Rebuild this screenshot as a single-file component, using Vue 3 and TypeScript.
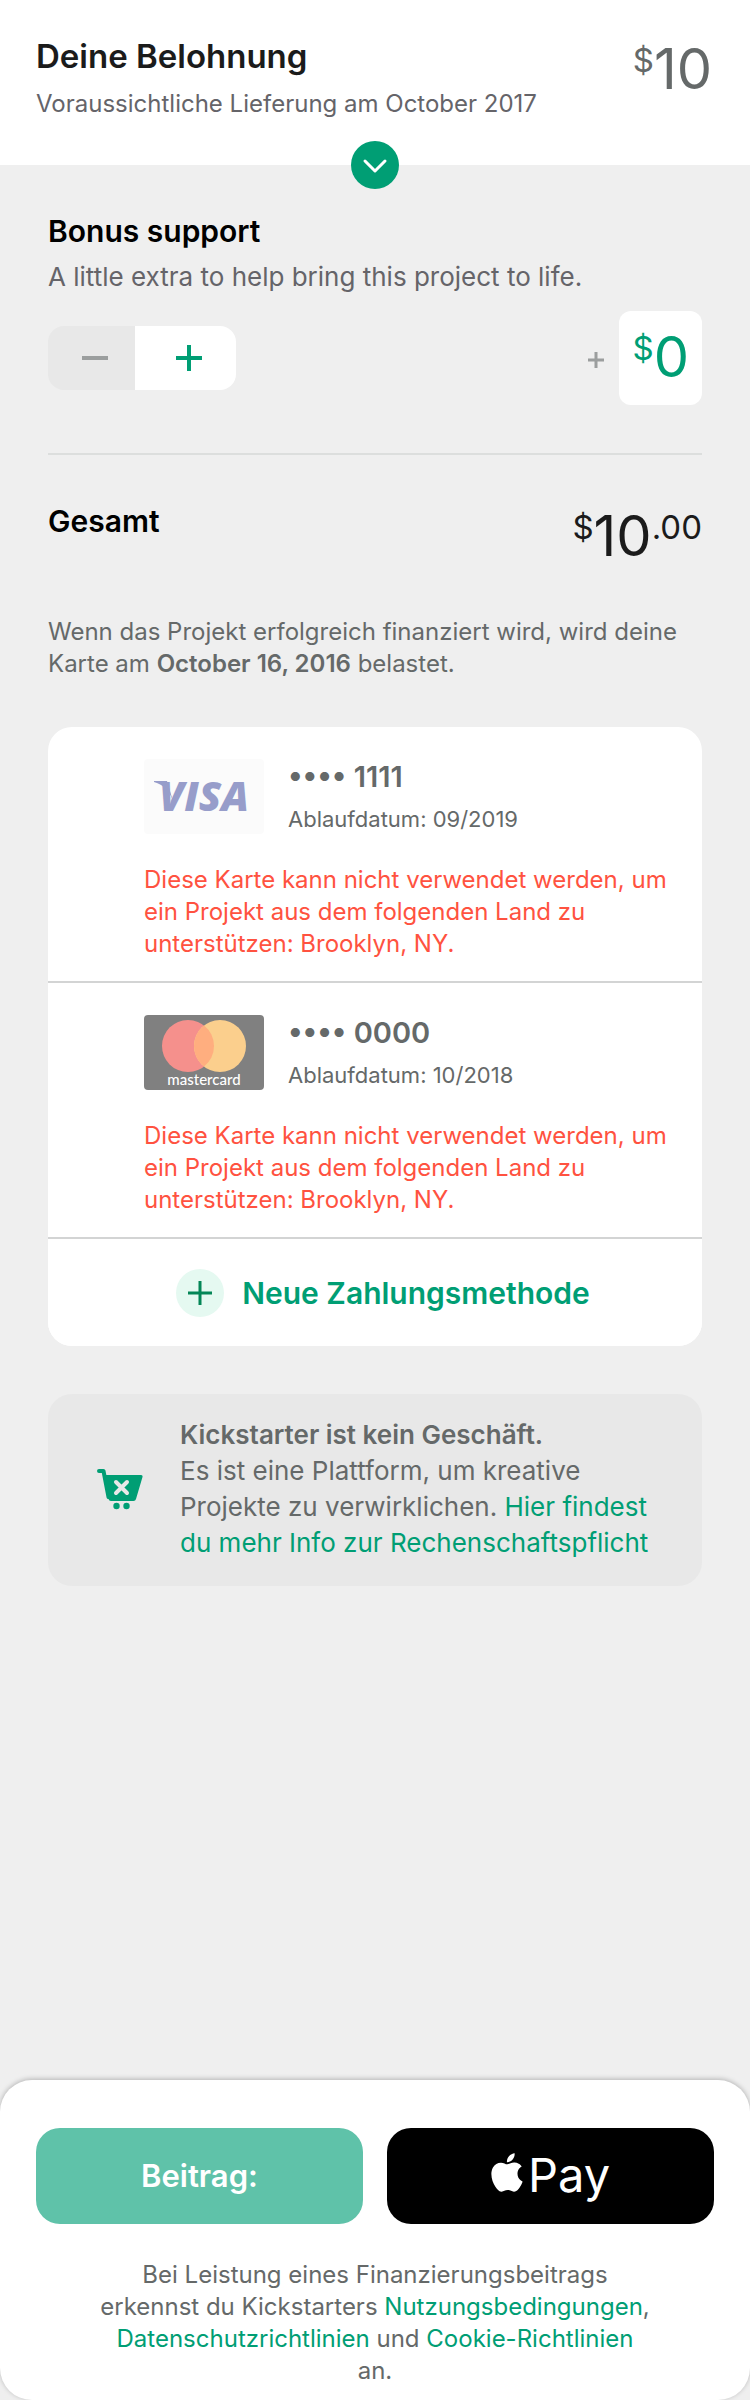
<script setup lang="ts">
import { computed, ref } from 'vue'

interface StoredCard {
  id: string
  brand: 'visa' | 'mastercard'
  lastFour: string
  expires: string
}

const pledge = 10
const bonus = ref('0')
const bonusValue = computed(() => Number(bonus.value) || 0)
const total = computed(() => {
  const [whole, cents] = (pledge + bonusValue.value).toFixed(2).split('.')
  return { whole, cents }
})

const cards: StoredCard[] = [
  { id: 'a', brand: 'visa', lastFour: '1111', expires: '09/2019' },
  { id: 'b', brand: 'mastercard', lastFour: '0000', expires: '10/2018' },
]

function step(delta: number) {
  bonus.value = String(Math.max(0, bonusValue.value + delta))
}
</script>

<template>
  <div class="page">
    <header class="header">
      <div>
        <h1 class="title">Deine Belohnung</h1>
        <p class="delivery">Voraussichtliche Lieferung am October 2017</p>
      </div>
      <p class="amount muted"><span class="small">$</span><span>{{ pledge }}</span></p>
      <button class="expand" type="button" aria-label="Details">
        <svg viewBox="0 0 48 48" width="48" height="48" aria-hidden="true">
          <path d="M14 20l10 10 10-10" fill="none" stroke="#fff" stroke-width="3" stroke-linecap="round" stroke-linejoin="round" />
        </svg>
      </button>
    </header>

    <main class="main">
      <section class="bonus">
        <h2 class="heading">Bonus support</h2>
        <p class="hint">A little extra to help bring this project to life.</p>
        <div class="bonus-row">
          <div class="stepper">
            <button class="minus" type="button" aria-label="Weniger" :disabled="bonusValue === 0" @click="step(-1)">
              <svg viewBox="0 0 28 28" width="28" height="28" aria-hidden="true">
                <path d="M1 14h26" stroke="#9b9e9e" stroke-width="4" />
              </svg>
            </button>
            <button class="plus" type="button" aria-label="Mehr" @click="step(1)">
              <svg viewBox="0 0 28 28" width="28" height="28" aria-hidden="true">
                <path d="M1 14h26M14 1v26" stroke="#009e74" stroke-width="4" />
              </svg>
            </button>
          </div>
          <div class="bonus-amount">
            <svg viewBox="0 0 18 22" width="18" height="22" aria-hidden="true">
              <path d="M1 13h16M9 5v16" stroke="#9b9e9e" stroke-width="3" />
            </svg>
            <label class="amount field">
              <span class="small">$</span>
              <input v-model="bonus" inputmode="numeric" aria-label="Bonus support" :style="{ width: bonus.length + 'ch' }" />
            </label>
          </div>
        </div>
      </section>

      <section class="total">
        <h2 class="heading">Gesamt</h2>
        <p class="amount">
          <span class="small">$</span><span>{{ total.whole }}</span><span class="small">.{{ total.cents }}</span>
        </p>
      </section>

      <p class="notice">
        Wenn das Projekt erfolgreich finanziert wird, wird deine Karte am <strong>October 16, 2016</strong> belastet.
      </p>

      <ul class="cards">
        <li v-for="card in cards" :key="card.id" class="card">
          <div class="card-top">
            <svg v-if="card.brand === 'visa'" class="brand" viewBox="0 0 120 75" role="img" aria-label="Visa">
              <rect width="120" height="75" rx="4" fill="#fbfbfb" />
              <path d="M10 22h13l6 20C25 31 20 26 10 23z" fill="#979dca" />
              <text x="15" y="52" class="visa">VISA</text>
            </svg>
            <svg v-else class="brand" viewBox="0 0 120 75" role="img" aria-label="Mastercard">
              <rect width="120" height="75" rx="4" fill="#808080" />
              <circle cx="44" cy="31" r="26" fill="#f5908c" />
              <circle cx="76" cy="31" r="26" fill="#fbcf8d" />
              <path d="M60 10.500a26 26 0 0 1 0 41a26 26 0 0 1 0-41z" fill="#ffae7f" />
              <text x="60" y="70" text-anchor="middle" class="mc">mastercard</text>
            </svg>
            <div>
              <p class="number">•••• {{ card.lastFour }}</p>
              <p class="expiry">Ablaufdatum: {{ card.expires }}</p>
            </div>
          </div>
          <p class="error">
            Diese Karte kann nicht verwendet werden, um ein Projekt aus dem folgenden Land zu unterstützen: Brooklyn, NY.
          </p>
        </li>
        <li>
          <button class="add" type="button">
            <svg viewBox="0 0 48 48" width="48" height="48" aria-hidden="true">
              <circle cx="24" cy="24" r="24" fill="#e5f9f1" />
              <path d="M12 24h24M24 12v24" stroke="#048657" stroke-width="3" />
            </svg>
            Neue Zahlungsmethode
          </button>
        </li>
      </ul>

      <aside class="info">
        <svg viewBox="0 0 48 42" width="48" height="42" aria-hidden="true">
          <path d="M3 3h4.500l5 26" fill="none" stroke="#009e74" stroke-width="4" stroke-linecap="round" stroke-linejoin="round" />
          <path d="M7 7h38a1.500 1.500 0 0 1 1.500 2L40 31q-.5 2-2.500 2H15q-2 0-2.500-2z" fill="#009e74" />
          <path d="M20 14l11 11M31 14L20 25" stroke="#e8e8e8" stroke-width="4" stroke-linecap="round" />
          <circle cx="20.500" cy="38" r="3.200" fill="#009e74" />
          <circle cx="30.500" cy="38" r="3.200" fill="#009e74" />
        </svg>
        <p>
          <strong>Kickstarter ist kein Geschäft.</strong><br />
          Es ist eine Plattform, um kreative Projekte zu verwirklichen.
          <a href="#">Hier findest du mehr Info zur Rechenschaftspflicht</a>
        </p>
      </aside>
    </main>

    <footer class="footer">
      <div class="actions">
        <button class="pledge" type="button">Beitrag:</button>
        <button class="apple-pay" type="button" aria-label="Apple Pay">
          <span class="apple-mark">
            <svg viewBox="2 0 20 24" width="32" height="39" aria-hidden="true">
              <path
                fill="#fff"
                d="M12.152 6.896c-.948 0-2.415-1.078-3.96-1.04-2.04.027-3.91 1.183-4.961 3.014-2.117 3.675-.546 9.103 1.519 12.09 1.013 1.454 2.208 3.09 3.792 3.039 1.52-.065 2.09-.987 3.935-.987 1.831 0 2.35.987 3.96.948 1.637-.026 2.676-1.48 3.676-2.948 1.156-1.688 1.636-3.325 1.662-3.415-.039-.013-3.182-1.221-3.22-4.857-.026-3.04 2.48-4.494 2.597-4.559-1.429-2.09-3.623-2.324-4.39-2.376-2-.156-3.675 1.09-4.61 1.09zM15.53 3.83c.843-1.012 1.4-2.427 1.245-3.83-1.207.052-2.662.805-3.532 1.818-.78.896-1.454 2.338-1.273 3.714 1.338.104 2.715-.688 3.559-1.701"
              />
            </svg>
            <span>Pay</span>
          </span>
        </button>
      </div>
      <p class="terms">
        Bei Leistung eines Finanzierungsbeitrags erkennst du Kickstarters <a href="#">Nutzungsbedingungen</a>,
        <a href="#">Datenschutzrichtlinien</a> und <a href="#">Cookie-Richtlinien</a> an.
      </p>
    </footer>
  </div>
</template>

<style>
body {
  background: #efefef;
}
</style>

<style scoped>
.page {
  display: flex;
  flex-direction: column;
  min-height: 100vh;
  background: #efefef;
  color: #656969;
  font-family: Inter, 'Liberation Sans', sans-serif;
  font-size: 24px;
  line-height: 32px;
}
h1,
h2,
p,
ul {
  margin: 0;
  padding: 0;
}
ul {
  list-style: none;
}
strong {
  font-weight: 600;
}
a {
  color: #009e74;
  text-decoration: none;
}
button {
  border: 0;
  padding: 0;
  font: inherit;
  cursor: pointer;
}
svg {
  display: block;
  flex: none;
}
.header {
  position: relative;
  display: flex;
  justify-content: space-between;
  padding: 36px 38px 45px 36px;
  background: #fff;
}
.title {
  color: #1b1b1b;
  font-size: 33px;
  line-height: 40px;
  font-weight: 600;
}
.delivery {
  margin-top: 12px;
  color: #656469;
}
.amount {
  display: flex;
  align-items: flex-start;
  color: #1b1b1b;
  font-size: 56px;
  line-height: 56px;
}
p.amount {
  margin-top: 5px;
}
.muted {
  color: #656969;
}
.small {
  font-size: 33px;
  line-height: 39px;
}
.expand {
  position: absolute;
  bottom: -24px;
  left: calc(50% - 24px);
  border-radius: 50%;
  background: #009e74;
}
.main {
  padding: 48px;
}
.heading {
  color: #000;
  font-size: 30px;
  line-height: 36px;
  font-weight: 600;
}
.hint {
  margin-top: 12px;
  color: #656469;
  font-size: 26px;
}
.bonus {
  padding-bottom: 48px;
  border-bottom: 2px solid #dcdedd;
}
.bonus-row {
  display: flex;
  align-items: center;
  justify-content: space-between;
  margin-top: 18px;
}
.stepper {
  display: flex;
  height: 64px;
  overflow: hidden;
  border-radius: 16px;
}
.stepper button {
  display: flex;
  align-items: center;
  justify-content: center;
  padding-left: 6px;
}
.stepper .minus {
  width: 87px;
  background: #e8e8e8;
}
.stepper .plus {
  width: 101px;
  background: #fff;
}
.bonus-amount {
  display: flex;
  align-items: center;
  gap: 14px;
}
.field {
  height: 94px;
  box-sizing: border-box;
  padding: 18px 13px;
  border-radius: 12px;
  background: #fff;
  color: #009e74;
}
.field input {
  height: 56px;
  padding: 0;
  border: 0;
  outline: 0;
  background: none;
  color: inherit;
  font: inherit;
}
.total {
  display: flex;
  justify-content: space-between;
  padding-top: 48px;
}
.notice {
  margin-top: 52px;
}
.cards {
  margin-top: 47px;
  overflow: hidden;
  border-radius: 24px;
  background: #fff;
}
.card {
  padding: 32px 32px 21px 96px;
  border-bottom: 2px solid #d3d4d4;
}
.card-top {
  display: flex;
  gap: 24px;
}
.brand {
  width: 120px;
  height: 75px;
}
.visa {
  fill: #979dca;
  font: italic 800 41px 'Open Sans', sans-serif;
}
.mc {
  fill: #fff;
  font: 500 15px Lato, sans-serif;
}
.number {
  font-size: 29px;
  line-height: 36px;
  font-weight: 600;
}
.expiry {
  margin-top: 8px;
  font-size: 22px;
}
.error {
  margin-top: 29px;
  color: #ff5240;
}
.add {
  display: flex;
  align-items: center;
  justify-content: center;
  gap: 18px;
  width: 100%;
  height: 107px;
  padding-left: 16px;
  background: #fff;
  color: #009e74;
  font-size: 30px;
  font-weight: 600;
}
.info {
  display: flex;
  align-items: center;
  gap: 36px;
  margin-top: 48px;
  padding: 23px 48px 25px;
  border-radius: 24px;
  background: #e8e8e8;
  font-size: 26px;
  line-height: 36px;
}
.footer {
  margin-top: auto;
  padding: 48px 36px 13px;
  border-radius: 32px;
  background: #fff;
  box-shadow: 0 -1px 5px rgba(0, 0, 0, 0.25);
}
.actions {
  display: grid;
  grid-template-columns: 1fr 1fr;
  gap: 24px;
}
.actions button {
  display: flex;
  align-items: center;
  justify-content: center;
  height: 96px;
  border-radius: 24px;
  color: #fff;
}
.actions .pledge {
  background: #5fc2a9;
  font-size: 31px;
  font-weight: 600;
}
.actions .apple-pay {
  padding-bottom: 6px;
  background: #000;
  font-size: 47px;
}
.apple-mark {
  display: flex;
  align-items: baseline;
  gap: 5px;
  line-height: 39px;
}
.terms {
  max-width: 552px;
  margin: 35px auto 0;
  text-align: center;
}
</style>
